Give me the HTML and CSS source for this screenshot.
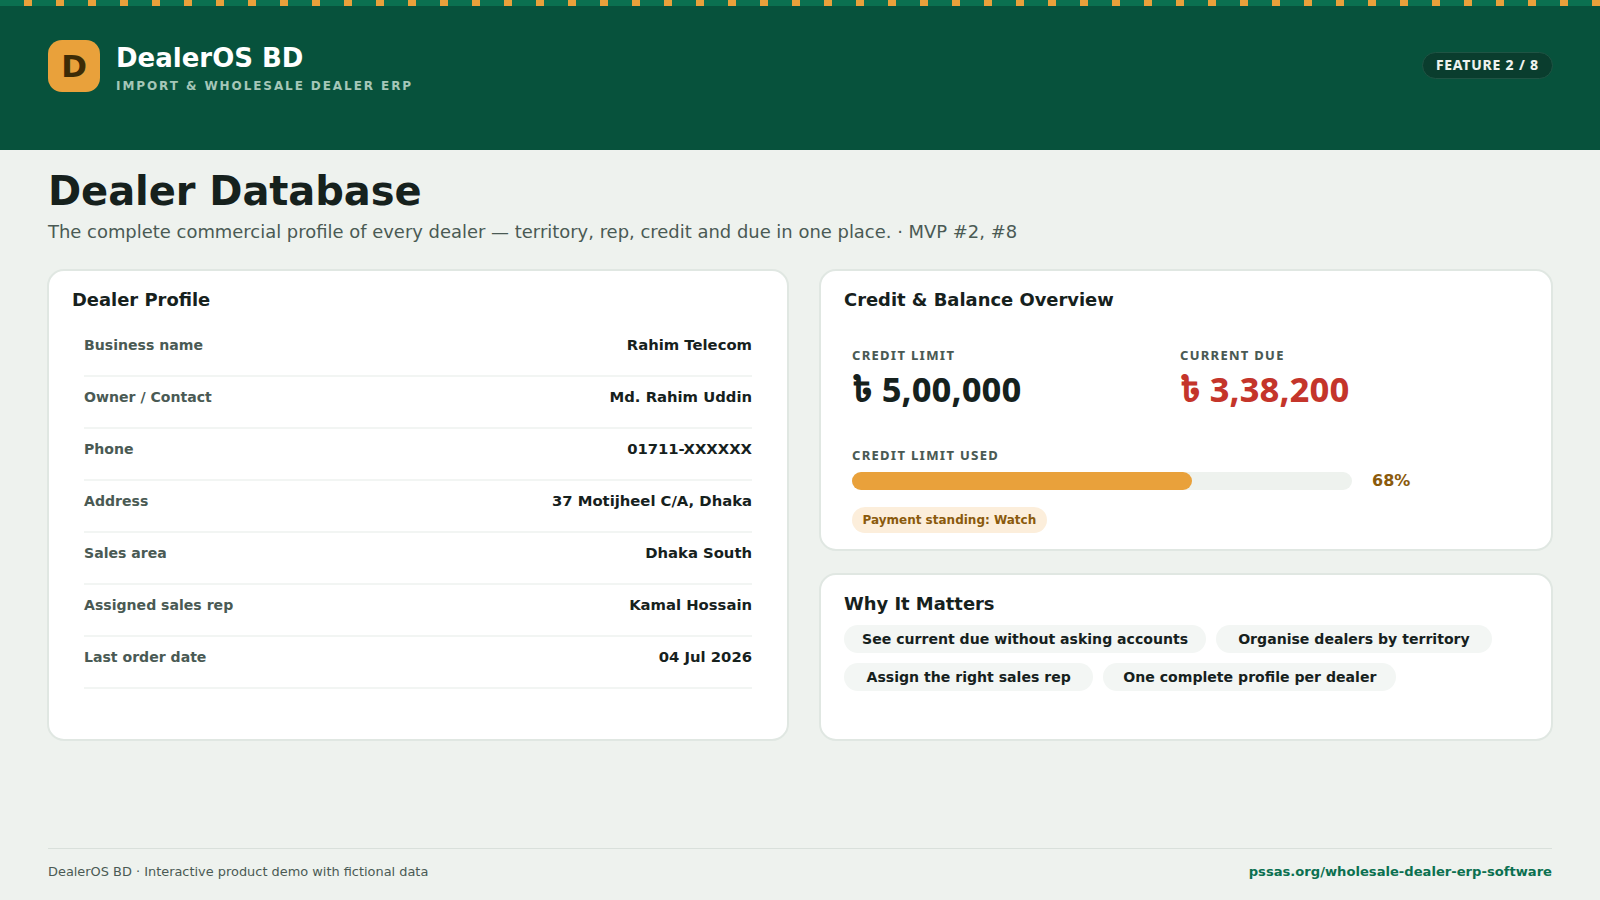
FILE: index.html
```html
<!DOCTYPE html>
<html lang="en">
<head>
    <meta charset="UTF-8">
    <meta name="viewport" content="width=device-width, initial-scale=1.0">
    <title>Dealer Database</title>
    <link rel="stylesheet" href="styles.css">
</head>
<body>
    <header class="topbar">
        <div class="stripe"></div>
        <div class="topbar-row">
            <div class="brand">
                <div class="brand-mark">D</div>
                <div class="brand-text">
                    <div class="brand-name">DealerOS BD</div>
                    <div class="brand-sub">IMPORT &amp; WHOLESALE DEALER ERP</div>
                </div>
            </div>
            <div class="feature-pill">FEATURE 2 / 8</div>
        </div>
    </header>

    <main class="content">
        <h1>Dealer Database</h1>
        <p class="lead">The complete commercial profile of every dealer — territory, rep, credit and due in one place. · MVP #2, #8</p>

        <div class="columns">
            <!-- Profile -->
            <section class="card">
                <h2>Dealer Profile</h2>
                <div class="profile-list">
                    <div class="profile-row"><span class="profile-label">Business name</span><span class="profile-value">Rahim Telecom</span></div>
                    <div class="profile-row"><span class="profile-label">Owner / Contact</span><span class="profile-value">Md. Rahim Uddin</span></div>
                    <div class="profile-row"><span class="profile-label">Phone</span><span class="profile-value">01711-XXXXXX</span></div>
                    <div class="profile-row"><span class="profile-label">Address</span><span class="profile-value">37 Motijheel C/A, Dhaka</span></div>
                    <div class="profile-row"><span class="profile-label">Sales area</span><span class="profile-value">Dhaka South</span></div>
                    <div class="profile-row"><span class="profile-label">Assigned sales rep</span><span class="profile-value">Kamal Hossain</span></div>
                    <div class="profile-row"><span class="profile-label">Last order date</span><span class="profile-value">04 Jul 2026</span></div>
                </div>
            </section>

            <div class="stack">
                <!-- Credit -->
                <section class="card credit-card">
                    <h2>Credit &amp; Balance Overview</h2>
                    <div class="credit-body">
                        <div class="stats">
                            <div>
                                <div class="small-label">CREDIT LIMIT</div>
                                <div class="amount">৳ 5,00,000</div>
                            </div>
                            <div>
                                <div class="small-label">CURRENT DUE</div>
                                <div class="amount amount-due">৳ 3,38,200</div>
                            </div>
                        </div>
                        <div class="small-label">CREDIT LIMIT USED</div>
                        <div class="usage">
                            <div class="track"><div class="fill" style="width: 68%"></div></div>
                            <span class="usage-pct">68%</span>
                        </div>
                        <div class="standing">Payment standing: Watch</div>
                    </div>
                </section>

                <!-- Why -->
                <section class="card why-card">
                    <h2>Why It Matters</h2>
                    <div class="chips">
                        <span class="chip">See current due without asking accounts</span>
                        <span class="chip chip-wide">Organise dealers by territory</span>
                        <span class="chip chip-wider">Assign the right sales rep</span>
                        <span class="chip chip-mid">One complete profile per dealer</span>
                    </div>
                </section>
            </div>
        </div>
    </main>

    <footer class="footer">
        <span>DealerOS BD · Interactive product demo with fictional data</span>
        <a class="footer-link" href="#">pssas.org/wholesale-dealer-erp-software</a>
    </footer>
</body>
</html>
```

FILE: styles.css
```css
* {
    box-sizing: border-box;
}
body {
    font-family: "DejaVu Sans", sans-serif;
    background-color: #eef2ee;
    color: #16211d;
    margin: 0;
    width: 1600px;
    height: 900px;
    display: flex;
    flex-direction: column;
    overflow: hidden;
}
.topbar {
    background-color: #07523c;
    height: 150px;
    flex: none;
}
.stripe {
    height: 6px;
    background: repeating-linear-gradient(90deg, #0b7050 0, #0b7050 24px, #e9a13b 24px, #e9a13b 32px);
}
.topbar-row {
    display: flex;
    justify-content: space-between;
    align-items: flex-start;
    padding: 34px 48px 0;
}
.brand {
    display: flex;
    align-items: flex-start;
    gap: 16px;
}
.brand-mark {
    width: 52px;
    height: 52px;
    border-radius: 14px;
    background-color: #e9a13b;
    color: #3d2b06;
    font-size: 31px;
    font-weight: 700;
    display: flex;
    align-items: center;
    justify-content: center;
}
.brand-text {
    margin-top: 2px;
}
.brand-name {
    color: #fff;
    font-size: 26px;
    font-weight: 700;
    line-height: 32px;
}
.brand-sub {
    color: #a5c7b8;
    font-size: 12px;
    font-weight: 700;
    letter-spacing: 1.92px;
    margin-top: 5px;
}
.feature-pill {
    font-family: "Noto Sans Bengali", "Noto Sans", sans-serif;
    background-color: #0a3d2e;
    border: 1px solid #1f5444;
    border-radius: 14px;
    color: #eef2ee;
    font-size: 14px;
    font-weight: 700;
    line-height: 18px;
    letter-spacing: 0.8px;
    padding: 5px 13px 2px;
    margin: 12px -1px 0 0;
}
.content {
    flex: 1;
    padding: 17px 48px 0;
}
h1 {
    font-size: 40px;
    line-height: 48px;
    letter-spacing: -0.08px;
    margin: 0;
}
.lead {
    color: #4a5a54;
    font-size: 17.96px;
    line-height: 26px;
    margin: 4px 0 24px;
}
.columns {
    display: grid;
    grid-template-columns: 742px 734px;
    gap: 30px;
    margin-left: -1px;
}
.stack {
    display: flex;
    flex-direction: column;
    gap: 22px;
}
.card {
    background-color: #fff;
    border: 2px solid #e0e7e2;
    border-radius: 17px;
    padding: 16px 23px;
}
.card h2 {
    font-size: 17.92px;
    line-height: 26px;
    margin: 0;
}
.profile-list {
    margin: 12px 12px 0;
}
.profile-row {
    display: flex;
    justify-content: space-between;
    align-items: baseline;
    height: 52px;
    padding-top: 11px;
    border-bottom: 2px solid #f2f5f3;
    font-size: 14.8px;
    font-weight: 700;
}
.profile-label {
    color: #4a5a54;
    font-size: 14.08px;
}
.credit-card {
    height: 282px;
}
.credit-body {
    padding: 36px 8px 0;
}
.stats {
    display: grid;
    grid-template-columns: 328px 1fr;
    margin-bottom: 33px;
}
.small-label {
    font-family: "Noto Sans Bengali", "Noto Sans", sans-serif;
    color: #4a5a54;
    font-size: 13px;
    font-weight: 700;
    line-height: 15px;
    letter-spacing: 1.3px;
}
.amount {
    font-family: "Noto Sans Bengali", "Noto Sans", sans-serif;
    font-size: 34.2px;
    font-weight: 700;
    line-height: 44px;
    margin-top: 8px;
}
.amount-due {
    color: #c4352b;
}
.usage {
    display: flex;
    align-items: center;
    gap: 20px;
    margin-top: 7px;
}
.track {
    width: 500px;
    height: 18px;
    border-radius: 9px;
    background-color: #eef2ee;
}
.fill {
    height: 100%;
    border-radius: 9px;
    background-color: #e9a13b;
}
.usage-pct {
    color: #8a5a0c;
    font-size: 16px;
    font-weight: 700;
}
.standing {
    width: fit-content;
    margin-top: 17px;
    padding: 6px 10.5px;
    border-radius: 13px;
    background-color: #fceedb;
    color: #8a5a0c;
    font-size: 12px;
    font-weight: 700;
    line-height: 14px;
}
.why-card {
    height: 168px;
}
.chips {
    display: flex;
    flex-wrap: wrap;
    gap: 10px;
    margin-top: 8px;
}
.chip {
    background-color: #f3f6f4;
    border-radius: 14px;
    padding: 6px 18px;
    font-size: 14.08px;
    font-weight: 700;
    line-height: 16px;
}
.chip-wide {
    padding: 6px 22px;
}
.chip-wider {
    padding: 6px 22.5px;
}
.chip-mid {
    padding: 6px 20px;
}
.footer {
    flex: none;
    margin: 0 48px;
    height: 52px;
    padding-bottom: 6px;
    border-top: 1px solid #d9e0db;
    display: flex;
    justify-content: space-between;
    align-items: center;
    color: #4a5a54;
    font-size: 12.92px;
}
.footer-link {
    color: #0b7050;
    font-size: 13.12px;
    font-weight: 700;
    text-decoration: none;
}
```
